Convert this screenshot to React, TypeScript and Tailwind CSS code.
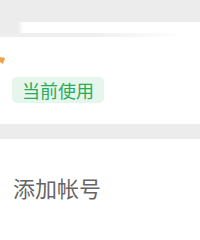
import React from 'react';

const App: React.FC = () => {
  return (
    <div
      className="w-[200px] h-[240px] bg-white overflow-hidden"
      style={{ fontFamily: '"Noto Sans CJK SC", "Noto Sans", sans-serif' }}
    >
      <div className="h-[22px] bg-[#ececec]" />
      <div className="flex flex-col">
        <div className="flex h-[11px]">
          <div className="w-[18px] bg-[#ececec]" />
          <div className="w-[5px] bg-gradient-to-r from-[#ececec] to-white" />
        </div>
        <div className="h-[4px] w-[182px] bg-gradient-to-r from-[#efefef] via-[#efefef] to-white" />
      </div>

      <div className="h-[20px]" />
      <svg width="6" height="8" viewBox="0 0 6 8" className="block">
        <path d="M0 0 L5 1 L3 7 L0 5 Z" fill="#f0a24a" />
      </svg>

      <div className="mt-[12px] pl-[12px]">
        <div className="inline-flex items-center h-[26px] px-[10px] rounded-[5px] bg-[#e7f6ec] text-[#25ad5c] text-[18px] leading-none">
          当前使用
        </div>
      </div>

      <div className="mt-[21px] h-[15px] bg-[#ececec]" />

      <div className="mt-[37px] pl-[13px] text-[22px] leading-none text-[#666666]">
        添加帐号
      </div>
    </div>
  );
};

export default App;
